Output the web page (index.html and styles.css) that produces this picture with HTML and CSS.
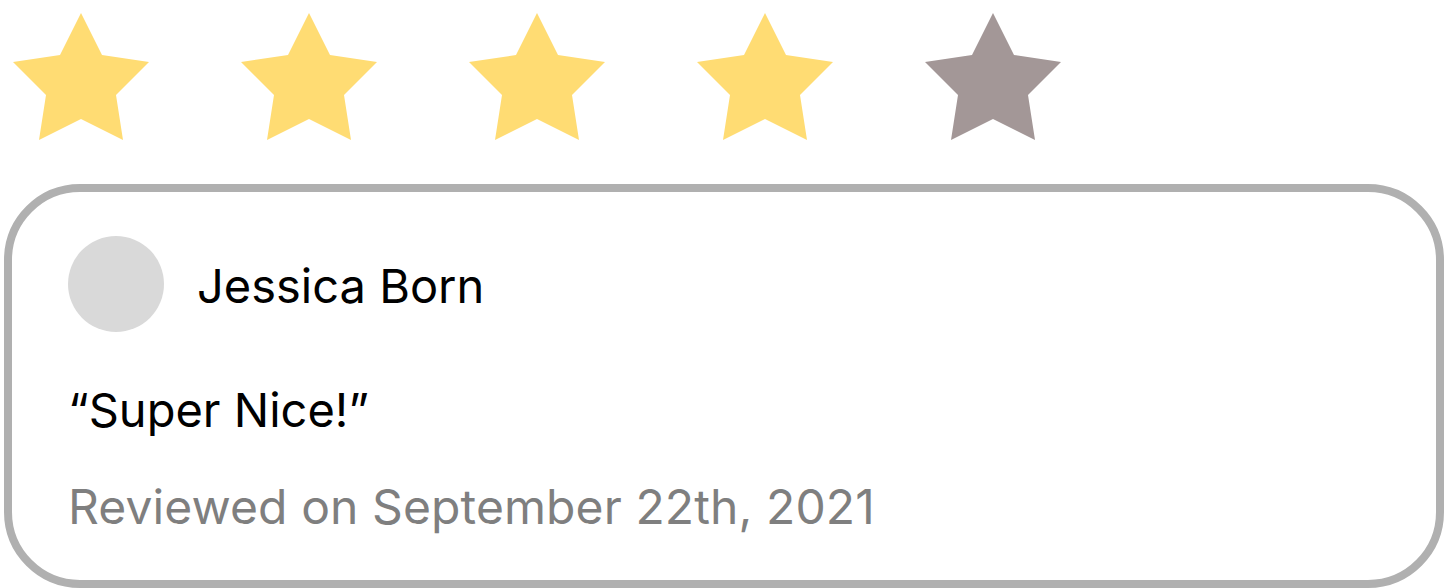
FILE: index.html
```html
<!DOCTYPE html>
<html>
<head>
<meta charset="utf-8">
<link rel="stylesheet" href="styles.css">
</head>
<body>
<div class="page">
  <div class="stars">
    <svg class="star on" viewBox="0 0 136 127"><polygon points="68,0 89,42 136,49 103,82 110,127 68,106 26,127 33,82 0,49 47,42"/></svg>
    <svg class="star on" viewBox="0 0 136 127"><polygon points="68,0 89,42 136,49 103,82 110,127 68,106 26,127 33,82 0,49 47,42"/></svg>
    <svg class="star on" viewBox="0 0 136 127"><polygon points="68,0 89,42 136,49 103,82 110,127 68,106 26,127 33,82 0,49 47,42"/></svg>
    <svg class="star on" viewBox="0 0 136 127"><polygon points="68,0 89,42 136,49 103,82 110,127 68,106 26,127 33,82 0,49 47,42"/></svg>
    <svg class="star off" viewBox="0 0 136 127"><polygon points="68,0 89,42 136,49 103,82 110,127 68,106 26,127 33,82 0,49 47,42"/></svg>
  </div>
  <div class="card">
    <div class="author">
      <div class="avatar"></div>
      <div class="name">Jessica Born</div>
    </div>
    <div class="quote">“Super Nice!”</div>
    <div class="date">Reviewed on September 22th, 2021</div>
  </div>
</div>
</body>
</html>
```

FILE: styles.css
```css
html, body {
  margin: 0;
  padding: 0;
  background: #ffffff;
}
.page {
  font-family: Inter, "Noto Sans", sans-serif;
  width: 1444px;
  height: 588px;
  overflow: hidden;
}
.stars {
  display: flex;
  gap: 92px;
  padding: 13px 0 0 13px;
  height: 127px;
}
.star {
  width: 136px;
  height: 127px;
  display: block;
}
.star.on polygon { fill: #FFDC73; }
.star.off polygon { fill: #A39797; }
.card {
  margin: 44px 0 0 4px;
  width: 1440px;
  height: 404px;
  box-sizing: border-box;
  border: 8px solid #B0B0B0;
  border-radius: 76px;
  padding: 44px 56px 0 56px;
}
.author {
  display: flex;
  align-items: center;
  gap: 33px;
}
.avatar {
  width: 96px;
  height: 96px;
  border-radius: 50%;
  background: #D9D9D9;
  flex: none;
}
.name {
  font-size: 47px;
  color: #000;
  line-height: 1;
  position: relative;
  top: 1px;
}
.quote {
  font-size: 47px;
  color: #000;
  line-height: 1;
  margin-top: 54px;
}
.date {
  font-size: 48px;
  color: #7F7F7F;
  line-height: 1;
  margin-top: 50px;
  letter-spacing: 0.1px;
}
```
